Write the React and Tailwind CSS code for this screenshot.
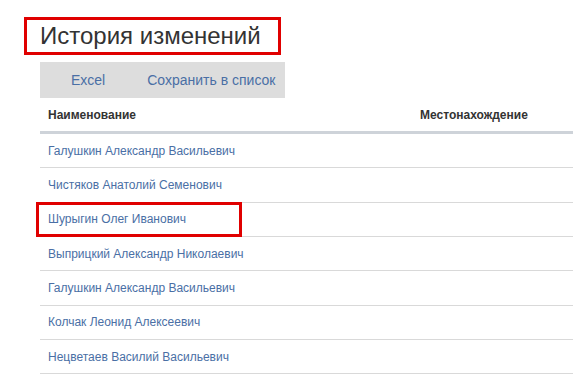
const rows = [
  "Галушкин Александр Васильевич",
  "Чистяков Анатолий Семенович",
  "Шурыгин Олег Иванович",
  "Выприцкий Александр Николаевич",
  "Галушкин Александр Васильевич",
  "Колчак Леонид Алексеевич",
  "Нецветаев Василий Васильевич",
];

export default function App() {
  return (
    <div className="min-h-[375px] w-[573px] overflow-hidden bg-white font-['Liberation_Sans',Arial,sans-serif]">
      {/* Title */}
      <div className="pl-6 pt-[17px]">
        <div className="flex h-[38px] w-[257px] items-center border-[3px] border-[#e00000] pl-[13px]">
          <h1 className="text-[24px] leading-none text-[#333]">История изменений</h1>
        </div>
      </div>

      <div className="pl-10 pt-[7px]">
        {/* Toolbar */}
        <div className="flex h-9 w-[245px] items-center bg-[#dddddd] text-[14px] text-[#4a6fa5]">
          <span className="pl-[31px]">Excel</span>
          <span className="pl-[42px]">Сохранить в список</span>
        </div>

        {/* Table */}
        <div className="w-[560px]">
          <div className="flex h-[36px] items-center border-b-[3px] border-[#ced3d9] text-[12px] font-bold text-[#333]">
            <span className="w-[380px] pl-2">Наименование</span>
            <span>Местонахождение</span>
          </div>
          {rows.map((name, idx) => (
            <div
              key={idx}
              className="relative flex h-[34.33px] items-center border-b border-[#d9d9d9] pl-2 text-[12px] text-[#4a6fa5]"
            >
              {name}
              {idx === 2 && (
                <div className="absolute -top-[1px] left-[-4px] h-[35px] w-[206px] border-[3px] border-[#e00000]" />
              )}
            </div>
          ))}
        </div>
      </div>
    </div>
  );
}
